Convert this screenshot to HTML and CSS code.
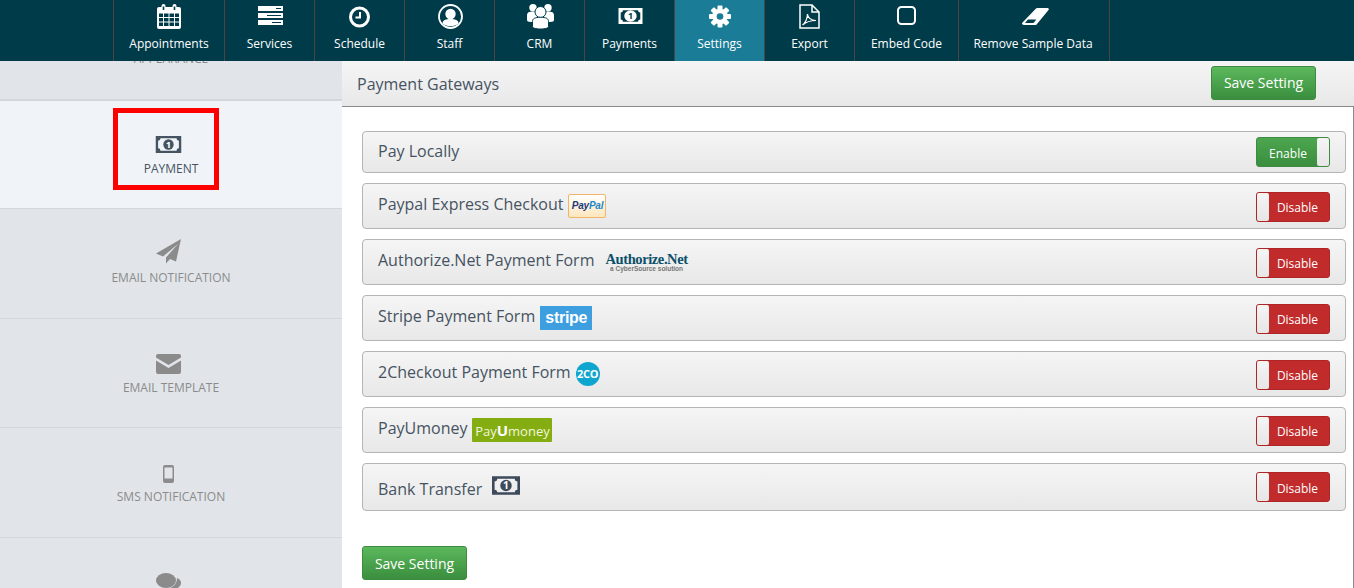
FILE: index.html
```html
<!DOCTYPE html>
<html lang="en">
<head>
  <meta charset="UTF-8" />
  <title>Payment Gateways</title>
  <link rel="stylesheet" href="styles.css">
</head>
<body>
  <nav class="topbar">
    <a class="nav-item w-appt" href="#">
      <svg class="nav-icon" width="24" height="25" viewBox="0 0 24 25">
        <path fill="#fff" d="M2 3h2.500V2a2 2 0 0 1 4 0v1h7V2a2 2 0 0 1 4 0v1H22a2 2 0 0 1 2 2v18a2 2 0 0 1-2 2H2a2 2 0 0 1-2-2V5a2 2 0 0 1 2-2z"/>
        <path fill="#003b49" d="M2 9.500h4v3.500H2zM7 9.500h4.500v3.500H7zM12.500 9.500H17v3.500h-4.500zM18 9.500h4v3.500h-4zM2 14h4v3.500H2zM7 14h4.500v3.500H7zM12.500 14H17v3.500h-4.500zM18 14h4v3.500h-4zM2 18.500h4V22H2zM7 18.500h4.500V22H7zM12.500 18.500H17V22h-4.500zM18 18.500h4V22h-4z"/>
        <path fill="#003b49" d="M5.700 2.500h1.600v3.500H5.700zM16.700 2.500h1.600v3.500h-1.600z"/>
      </svg>
      <span>Appointments</span>
    </a>
    <a class="nav-item" href="#">
      <svg class="nav-icon nudge" width="25" height="25" viewBox="0 0 25 25">
        <path fill="#fff" d="M0 2h25v5H0zM0 9h25v5H0zM0 16h25v5H0z"/>
        <path stroke="#003b49" stroke-width="1.200" d="M18 4.500h5M9 11.500h14M14 18.500h9"/>
      </svg>
      <span>Services</span>
    </a>
    <a class="nav-item" href="#">
      <svg class="nav-icon" width="25" height="25" viewBox="0 0 25 25">
        <circle cx="12.500" cy="13" r="9" fill="none" stroke="#fff" stroke-width="3"/>
        <path d="M13 8v5.500H8.500" fill="none" stroke="#fff" stroke-width="2"/>
      </svg>
      <span>Schedule</span>
    </a>
    <a class="nav-item" href="#">
      <svg class="nav-icon nudge" width="25" height="25" viewBox="0 0 25 25">
        <circle cx="12.500" cy="12.500" r="11.500" fill="none" stroke="#fff" stroke-width="1.800"/>
        <circle cx="12.500" cy="10" r="5.200" fill="#fff"/>
        <path fill="#fff" d="M4.500 19.500c0-3.500 3.500-4.500 8-4.500s8 1 8 4.500c-4 3.500-12 3.500-16 0z"/>
      </svg>
      <span>Staff</span>
    </a>
    <a class="nav-item" href="#">
      <svg class="nav-icon nudge" width="27" height="25" viewBox="0 0 27 25">
        <circle cx="6" cy="3.700" r="3.700" fill="#fff"/>
        <circle cx="21" cy="3.700" r="3.700" fill="#fff"/>
        <path fill="#fff" d="M0 16v-5c0-2.500 2-3.500 6-3.500S12 9 12 11v7H4c-3 0-4-1-4-2zM27 16v-5c0-2.500-2-3.500-6-3.500S15 9 15 11v7h8c3 0 4-1 4-2z"/>
        <circle cx="13.500" cy="8" r="5.500" fill="#fff" stroke="#003b49"/>
        <path fill="#fff" stroke="#003b49" d="M5.500 22.500v-5c0-3 2.500-4.200 8-4.200s8 1.200 8 4.200v5c0 1.500-3 2.500-8 2.500s-8-1-8-2.500z"/>
      </svg>
      <span>CRM</span>
    </a>
    <a class="nav-item" href="#">
      <svg class="nav-icon bill-nav nudge" width="27" height="16" viewBox="0 0 27 18">
        <path fill-rule="evenodd" d="M0 0h27v18H0zM5 2.500Q5 5 2.500 5v8Q5 13 5 15.500h17q0-2.500 2.500-2.500V5Q22 5 22 2.500z"/>
        <ellipse cx="13.500" cy="9" rx="7" ry="6.500"/>
        <text x="13.500" y="12.500" class="bill-one">1</text>
      </svg>
      <span>Payments</span>
    </a>
    <a class="nav-item active" href="#">
      <svg class="nav-icon" width="22" height="25" viewBox="-11 -12.500 22 25">
        <g fill="#fff">
          <circle r="7.800"/>
          <rect x="-2.500" y="-11" width="5" height="22" rx="1"/>
          <rect x="-2.500" y="-11" width="5" height="22" rx="1" transform="rotate(45)"/>
          <rect x="-2.500" y="-11" width="5" height="22" rx="1" transform="rotate(90)"/>
          <rect x="-2.500" y="-11" width="5" height="22" rx="1" transform="rotate(135)"/>
        </g>
        <circle r="3.300" fill="#1a7c96"/>
      </svg>
      <span>Settings</span>
    </a>
    <a class="nav-item" href="#">
      <svg class="nav-icon" width="21" height="25" viewBox="0 0 21 25" fill="none" stroke="#fff" stroke-width="1.500">
        <path d="M1 1h12l7 7v16H1zM13 1v7h7"/>
        <path stroke-width="1.200" d="M3.500 21c3-2 5-7 5-11 0 3 3 6.500 8.500 6.500-5 0-10 1.500-13.500 4.500z"/>
      </svg>
      <span>Export</span>
    </a>
    <a class="nav-item w-embed" href="#">
      <svg class="nav-icon" width="19" height="25" viewBox="0 0 19 25">
        <rect x="1" y="3" width="17" height="17" rx="3.500" fill="none" stroke="#fff" stroke-width="2"/>
      </svg>
      <span>Embed Code</span>
    </a>
    <a class="nav-item w-remove" href="#">
      <svg class="nav-icon nudge" width="27" height="25" viewBox="0 0 27 25">
        <path fill="#fff" d="M14 4.500a2 2 0 0 1 1.500-.500H25c1.500 0 2.300 1 1.500 2L15 20a2 2 0 0 1-1.500 1H2c-1.700 0-2.500-1.300-1.500-2.500z"/>
        <path fill="#003b49" d="M6 15.500h8.300L11.500 19H3z"/>
      </svg>
      <span>Remove Sample Data</span>
    </a>
  </nav>

  <div class="page">
    <aside class="sidebar">
      <ul class="side-list">
        <li class="side-item appearance"><span class="side-label">APPEARANCE</span></li>
        <li class="side-item selected">
          <div class="side-icon-box">
            <svg class="side-icon" width="27" height="17" viewBox="0 0 27 18">
              <path fill-rule="evenodd" d="M0 0h27v18H0zM5 2.500Q5 5 2.500 5v8Q5 13 5 15.500h17q0-2.500 2.500-2.500V5Q22 5 22 2.500z"/>
              <circle cx="13.500" cy="9" r="5.500"/>
              <text x="13.500" y="12.500" class="bill-one">1</text>
            </svg>
          </div>
          <span class="side-label">PAYMENT</span>
          <div class="marker"></div>
        </li>
        <li class="side-item">
          <div class="side-icon-box">
            <svg width="25" height="25" viewBox="0 0 25 25"><path fill="#8b8b8b" d="M25 0 0 14.500l7 3L22 5 10 18.500v6l4-4.500 6 2.500z"/></svg>
          </div>
          <span class="side-label">EMAIL NOTIFICATION</span>
        </li>
        <li class="side-item">
          <div class="side-icon-box">
            <svg width="25" height="20" viewBox="0 0 25 20"><path fill="#8b8b8b" d="M2 0h21a2 2 0 0 1 2 2v1.500L12.500 11 0 3.500V2a2 2 0 0 1 2-2zM0 6.500l12.500 7.500L25 6.500V18a2 2 0 0 1-2 2H2a2 2 0 0 1-2-2z"/></svg>
          </div>
          <span class="side-label">EMAIL TEMPLATE</span>
        </li>
        <li class="side-item">
          <div class="side-icon-box">
            <svg width="11" height="18" viewBox="0 0 11 18"><path fill="#8b8b8b" fill-rule="evenodd" d="M2 0h7a2 2 0 0 1 2 2v14a2 2 0 0 1-2 2H2a2 2 0 0 1-2-2V2a2 2 0 0 1 2-2zM1.500 2.500v11h8v-11z"/></svg>
          </div>
          <span class="side-label">SMS NOTIFICATION</span>
        </li>
        <li class="side-item">
          <div class="side-icon-box">
            <svg width="25" height="20" viewBox="0 0 25 20"><ellipse cx="10" cy="7.500" rx="10" ry="7.500" fill="#8b8b8b"/><path fill="#8b8b8b" d="M21 5c3 1 4 3 4 5 0 3-3 6-7 6H9c6 0 12-4 12-11z"/></svg>
          </div>
        </li>
      </ul>
    </aside>

    <main class="content">
      <header class="content-head">
        <h2>Payment Gateways</h2>
        <button class="btn-save">Save Setting</button>
      </header>

      <section class="gateways">
        <div class="gateway first">
          <span class="gateway-name"><span class="gateway-text">Pay Locally</span></span>
          <span class="toggle on"><span class="toggle-text">Enable</span><span class="toggle-handle"></span></span>
        </div>
        <div class="gateway">
          <span class="gateway-name"><span class="gateway-text">Paypal Express Checkout</span><span class="logo-paypal"><b>Pay</b><b class="pal">Pal</b></span></span>
          <span class="toggle off"><span class="toggle-handle"></span><span class="toggle-text">Disable</span></span>
        </div>
        <div class="gateway">
          <span class="gateway-name"><span class="gateway-text">Authorize.Net Payment Form</span><span class="logo-authorize"><b>Authorize.Net</b><small>a CyberSource solution</small></span></span>
          <span class="toggle off"><span class="toggle-handle"></span><span class="toggle-text">Disable</span></span>
        </div>
        <div class="gateway">
          <span class="gateway-name"><span class="gateway-text">Stripe Payment Form</span><span class="logo-stripe">stripe</span></span>
          <span class="toggle off"><span class="toggle-handle"></span><span class="toggle-text">Disable</span></span>
        </div>
        <div class="gateway">
          <span class="gateway-name"><span class="gateway-text">2Checkout Payment Form</span><span class="logo-2co">2CO</span></span>
          <span class="toggle off"><span class="toggle-handle"></span><span class="toggle-text">Disable</span></span>
        </div>
        <div class="gateway">
          <span class="gateway-name"><span class="gateway-text">PayUmoney</span><span class="logo-payu">Pay<b>U</b>money</span></span>
          <span class="toggle off"><span class="toggle-handle"></span><span class="toggle-text">Disable</span></span>
        </div>
        <div class="gateway last">
          <span class="gateway-name"><span class="gateway-text">Bank Transfer</span>
            <svg class="bill-row" width="28" height="19" viewBox="0 0 27 18">
              <path fill-rule="evenodd" d="M0 0h27v18H0zM5 2.500Q5 5 2.500 5v8Q5 13 5 15.500h17q0-2.500 2.500-2.500V5Q22 5 22 2.500z"/>
              <circle cx="13.500" cy="9" r="5.500"/>
              <text x="13.500" y="12.500" class="bill-one">1</text>
            </svg>
          </span>
          <span class="toggle off"><span class="toggle-handle"></span><span class="toggle-text">Disable</span></span>
        </div>
        <button class="btn-save bottom">Save Setting</button>
      </section>
    </main>
  </div>
</body>
</html>
```

FILE: styles.css
```css
html, body {
  margin: 0;
  height: 588px;
  overflow: hidden;
}

body {
  font-family: "Open Sans", "Liberation Sans", sans-serif;
  background: #fff;
  color: #465362;
}

.bill-one {
  font-family: "Open Sans", sans-serif;
  font-size: 10px;
  font-weight: 700;
  text-anchor: middle;
  fill: #fff;
}

/* top bar */
.topbar {
  position: relative;
  z-index: 2;
  display: flex;
  height: 61px;
  padding-left: 113px;
  background: #003b49;
}

.nav-item {
  display: flex;
  flex-direction: column;
  align-items: center;
  box-sizing: content-box;
  width: 89px;
  height: 61px;
  border-left: 1px solid #4f4444;
  color: #fff;
  font-size: 12px;
  line-height: 16px;
  text-decoration: none;
  white-space: nowrap;
}

.nav-item:last-child {
  border-right: 1px solid #4f4444;
}

.nav-icon {
  flex: none;
  margin-top: 4px;
}

.nav-item span {
  margin-top: 7px;
}

.w-appt {
  width: 110px;
}

.w-embed {
  width: 103px;
}

.w-remove {
  width: 150px;
}

.w-remove span {
  margin-right: 2px;
}

.nav-item.active {
  background: #1a7c96;
}

.bill-nav {
  margin: 8px 0 5px;
  fill: #fff;
}

.bill-nav .bill-one {
  fill: #003b49;
}

.nudge {
  margin-left: 2px;
}

/* sidebar */
.page {
  display: flex;
  height: 527px;
}

.sidebar {
  flex: 0 0 342px;
  overflow: hidden;
  background: #e1e5e9;
}

.side-list {
  margin: -46px 0 0;
  padding: 0;
  list-style: none;
}

.side-item {
  position: relative;
  display: flex;
  flex-direction: column;
  align-items: center;
  box-sizing: border-box;
  height: 109.500px;
  border-bottom: 1px solid #d3d7db;
}

.side-icon-box {
  display: flex;
  align-items: flex-end;
  height: 55px;
  margin: 0 5px 6px 0;
}

.side-item.appearance {
  height: 86px;
  padding-top: 36px;
  border-bottom: 2px solid #d3d7db;
}

.side-item.selected {
  height: 108px;
  background: #f0f4f8;
}

.selected .side-icon-box {
  height: 52px;
  margin-bottom: 8px;
}

.side-icon {
  display: block;
  fill: #465362;
}

.side-label {
  font-size: 12px;
  line-height: 16px;
  color: #8b8b8b;
  white-space: nowrap;
}

.selected .side-label {
  color: #465362;
}

/* red box drawn on top of the selected item */
.marker {
  position: absolute;
  top: 7px;
  left: 113px;
  box-sizing: border-box;
  width: 106px;
  height: 82px;
  border: 5px solid #f00;
}

/* main column */
.content {
  flex: 1;
  min-width: 0;
  border-right: 1px solid #888;
}

.content-head {
  display: flex;
  align-items: center;
  justify-content: space-between;
  box-sizing: border-box;
  height: 46px;
  margin-right: -1px;
  padding: 0 38px 2px 15px;
  border-bottom: 1px solid #8a8a8a;
  background: linear-gradient(#f5f5f5, #e8e8e8);
}

.content-head h2 {
  margin: 2px 0 0;
  font-size: 16px;
  font-weight: 400;
  color: #465362;
}

.btn-save {
  box-sizing: border-box;
  width: 105px;
  height: 34px;
  padding: 0;
  border: 1px solid #3d8b40;
  border-radius: 3px;
  background: linear-gradient(#5cb85c, #3a8e3e);
  color: #fff;
  font-family: inherit;
  font-size: 14px;
  cursor: pointer;
}

.gateways {
  padding: 24px 7px 0 20px;
}

.gateway {
  display: flex;
  align-items: center;
  justify-content: space-between;
  box-sizing: border-box;
  height: 46px;
  margin-bottom: 10px;
  padding: 0 15px;
  border: 1px solid #b5b5b5;
  border-radius: 4px;
  background: linear-gradient(#f5f5f5, #e8e8e8);
}

.gateway.first {
  height: 42px;
}

.gateway.last {
  height: 48px;
}

.gateway-name {
  display: flex;
  align-items: center;
  font-size: 16px;
  line-height: 24px;
  white-space: nowrap;
}

.gateway-text {
  margin-bottom: 4px;
}

.first .gateway-text {
  margin-bottom: 2px;
}

.last .gateway-text {
  margin: 4px 0 0;
}

.toggle {
  display: flex;
  align-items: center;
  box-sizing: border-box;
  width: 74px;
  height: 30px;
  border-radius: 3px;
  color: #fff;
  font-size: 12px;
}

.toggle.on {
  background: linear-gradient(#4da64f, #3a8e3e);
  border: 1px solid #3d8b40;
}

.toggle.off {
  margin-top: 1px;
  background: #c12b2b;
  border: 1px solid #b02525;
}

.last .toggle.off {
  margin-top: 0;
}

.toggle-text {
  flex: 1;
  padding-top: 2px;
  text-align: center;
}

.on .toggle-text {
  padding-left: 2px;
}

.off .toggle-text {
  padding-right: 3px;
}

.toggle-handle {
  width: 12px;
  height: 100%;
  border-radius: 2px;
  background: linear-gradient(#f5f5f5, #e6e6e6);
}

/* gateway logos */
.logo-paypal {
  display: flex;
  align-items: center;
  justify-content: center;
  box-sizing: border-box;
  width: 38px;
  height: 24px;
  margin-left: 5px;
  border: 1px solid #f0b46a;
  border-radius: 2px;
  background: linear-gradient(#fff, #fde6bd);
  font-family: "Liberation Sans", sans-serif;
  font-size: 10px;
  font-style: italic;
  letter-spacing: -0.200px;
  color: #1a3a7c;
}

.logo-paypal .pal {
  color: #1e88c9;
}

.logo-authorize {
  display: flex;
  flex-direction: column;
  align-items: center;
  margin-left: 11px;
  font-family: "Liberation Serif", serif;
  line-height: 1;
}

.logo-authorize b {
  font-size: 14.500px;
  letter-spacing: -0.400px;
  color: #0c4f6b;
}

.logo-authorize small {
  font-family: "Liberation Sans", sans-serif;
  font-size: 6.500px;
  font-weight: 700;
  color: #777;
}

.logo-stripe {
  width: 52px;
  height: 24px;
  margin-left: 5px;
  background: #3d9ee0;
  color: #fff;
  font-family: "Liberation Sans", sans-serif;
  font-size: 16px;
  font-weight: 700;
  letter-spacing: -0.300px;
  line-height: 23px;
  text-align: center;
}

.logo-2co {
  width: 24px;
  height: 24px;
  margin-left: 5px;
  overflow: hidden;
  border-radius: 50%;
  background: #0ea5cf;
  color: #fff;
  font-size: 11px;
  font-weight: 700;
  letter-spacing: -0.300px;
  line-height: 24px;
  text-align: center;
}

.logo-payu {
  width: 80px;
  height: 24px;
  margin-left: 5px;
  border-radius: 1px;
  background: #84ad12;
  color: #f2f6dc;
  font-size: 13px;
  line-height: 25px;
  text-align: center;
}

.logo-payu b {
  font-size: 15px;
  color: #fff;
}

.bill-row {
  margin: -4px 0 0 10px;
  fill: #3c4a5c;
}

.btn-save.bottom {
  display: block;
  margin-top: 35px;
}
```
